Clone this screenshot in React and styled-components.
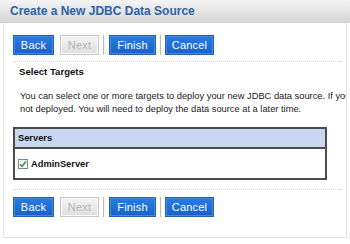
import React from "react";
import styled, { createGlobalStyle } from "styled-components";

const Global = createGlobalStyle`
  html, body { margin: 0; padding: 0; background: #fff; overflow: hidden; }
  body { font-family: "Liberation Sans", Arial, sans-serif; color: #111; }
`;

const Page = styled.div`
  width: 350px;
  height: 244px;
  overflow: hidden;
`;

const TitleBar = styled.div`
  height: 23px;
  display: flex;
  align-items: center;
  padding-left: 10px;
  background: linear-gradient(#f5f5f5, #e2e2e2 60%, #d6d6d6);
  border-bottom: 1px solid #d0d0d0;
  box-sizing: border-box;
`;

const Title = styled.h1`
  margin: 0;
  font-size: 12px;
  font-weight: bold;
  color: #2d62a6;
  white-space: nowrap;
`;

const Panel = styled.div`
  margin: 0 3px;
  border: 1px solid #e6e6e6;
  border-top: none;
  padding: 0 0 20px 9px;
  display: flex;
  flex-direction: column;
`;

const ButtonBar = styled.div`
  display: flex;
  align-items: center;
  margin-top: ${(p) => p.$top}px;
`;

const Button = styled.button`
  width: ${(p) => p.$w}px;
  height: 20px;
  margin-left: ${(p) => p.$gap || 0}px;
  padding: 0;
  font-family: "Liberation Sans", Arial, sans-serif;
  font-size: 11px;
  letter-spacing: 0.2px;
  border: 1px solid ${(p) => (p.$disabled ? "#c6c6c6" : "#2a5fae")};
  color: ${(p) => (p.$disabled ? "#b4b4b4" : "#fff")};
  background: ${(p) =>
    p.$disabled
      ? "linear-gradient(#f4f4f4, #dedede)"
      : "linear-gradient(#2c7be0, #1860cc)"};
  box-shadow: inset 0 0 0 1px ${(p) => (p.$disabled ? "#fafafa" : "#3f8ae6")};
  box-sizing: border-box;
`;

const Sep = styled.span`
  width: 1px;
  height: 20px;
  margin-left: ${(p) => p.$gap}px;
  background: #bdbdbd;
  border-right: 1px solid #f4f4f4;
`;

const Dashed = styled.div`
  margin-top: ${(p) => p.$top}px;
  margin-right: 4px;
  border-top: 1px dotted #d4d4d4;
`;

const Section = styled.div`
  padding-left: 6px;
  overflow: hidden;
`;

const Heading = styled.h2`
  margin: 4px 0 0;
  font-size: 9.6px;
  line-height: 12px;
  font-weight: bold;
  color: #111;
`;

const Para = styled.p`
  margin: 12px 0 0;
  padding-left: 1px;
  font-size: 9.3px;
  line-height: 13px;
  white-space: nowrap;
  color: #222;
`;

const Table = styled.div`
  margin-top: 11px;
  width: 314px;
  border: 2px solid #4c4c4c;
  box-sizing: border-box;
`;

const HeadRow = styled.div`
  height: 18px;
  display: flex;
  align-items: center;
  padding-left: 3px;
  background: #c8d7ef;
  border-bottom: 2px solid #4c4c4c;
  font-size: 9.3px;
  font-weight: bold;
`;

const Row = styled.div`
  height: 29px;
  display: flex;
  align-items: center;
  padding-left: 3px;
  gap: 3px;
  font-size: 9.3px;
  font-weight: bold;
`;

const Box = styled.span`
  width: 10px;
  height: 10px;
  box-sizing: border-box;
  border: 1px solid #7a8a99;
  background: linear-gradient(#eef3f7, #ffffff);
  display: flex;
  align-items: center;
  justify-content: center;
`;

function Buttons({ top }) {
  return (
    <ButtonBar $top={top}>
      <Button $w={41}>Back</Button>
      <Button $w={39} $gap={6} $disabled>
        Next
      </Button>
      <Sep $gap={4} />
      <Button $w={47} $gap={4}>Finish</Button>
      <Sep $gap={4} />
      <Button $w={49} $gap={3}>Cancel</Button>
    </ButtonBar>
  );
}

export default function App() {
  return (
    <Page>
      <Global />
      <TitleBar>
        <Title>Create a New JDBC Data Source</Title>
      </TitleBar>
      <Panel>
        <Buttons top={12} />
        <Dashed $top={6} />
        <Section>
          <Heading>Select Targets</Heading>
          <Para>
            You can select one or more targets to deploy your new JDBC data source. If you choose not to target this data source, it will be created but
            <br />
            not deployed. You will need to deploy the data source at a later time.
          </Para>
        </Section>
        <Table>
          <HeadRow>Servers</HeadRow>
          <Row>
            <Box>
              <svg width="8" height="8" viewBox="0 0 8 8">
                <path d="M1 4.2 L3.1 6.3 L7 1.5" fill="none" stroke="#2e9a2e" strokeWidth="1.6" />
              </svg>
            </Box>
            AdminServer
          </Row>
        </Table>
        <Dashed $top={9} />
        <Buttons top={7} />
      </Panel>
    </Page>
  );
}
